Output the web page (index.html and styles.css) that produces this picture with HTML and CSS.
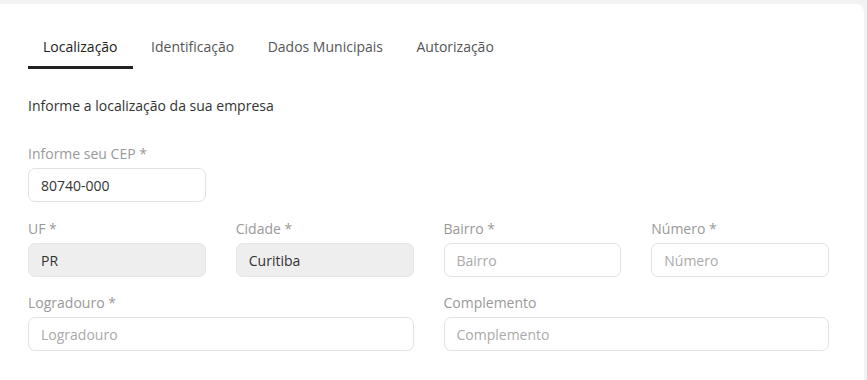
FILE: index.html
```html
<!DOCTYPE html>
<html lang="pt-BR">

<head>
    <meta charset="UTF-8">
    <meta name="viewport" content="width=device-width, initial-scale=1.0">
    <title>Cadastro - Localização</title>
    <link rel="stylesheet" href="styles.css">
</head>

<body>
    <div class="card">
        <div class="tabs">
            <div class="tab active">Localização</div>
            <div class="tab">Identificação</div>
            <div class="tab">Dados Municipais</div>
            <div class="tab">Autorização</div>
        </div>

        <p class="intro">Informe a localização da sua empresa</p>

        <form class="form">
            <div class="field first">
                <label for="cep">Informe seu CEP *</label>
                <input id="cep" type="text" value="80740-000">
            </div>

            <div class="field">
                <label for="uf">UF *</label>
                <input id="uf" type="text" value="PR" disabled>
            </div>
            <div class="field">
                <label for="cidade">Cidade *</label>
                <input id="cidade" type="text" value="Curitiba" disabled>
            </div>
            <div class="field">
                <label for="bairro">Bairro *</label>
                <input id="bairro" type="text" placeholder="Bairro">
            </div>
            <div class="field">
                <label for="numero">Número *</label>
                <input id="numero" type="text" placeholder="Número">
            </div>

            <div class="field wide">
                <label for="logradouro">Logradouro *</label>
                <input id="logradouro" type="text" placeholder="Logradouro">
            </div>
            <div class="field wide">
                <label for="complemento">Complemento</label>
                <input id="complemento" type="text" placeholder="Complemento">
            </div>
        </form>
    </div>
</body>

</html>
```

FILE: styles.css
```css
body {
    margin: 0;
    padding: 0;
    font-family: "Open Sans", sans-serif;
    font-size: 14px;
    line-height: 19px;
    background-color: #f2f2f2;
    color: #333;
}

.card {
    background-color: #ffffff;
    margin: 4px 3px 0 0;
    min-height: calc(100vh - 4px);
    box-sizing: border-box;
    padding: 33px 35px 0 28px;
    border-top-right-radius: 8px;
}

.tabs {
    display: flex;
    gap: 3.5px;
}

.tab {
    padding: 0 15px 10px;
    border-bottom: 3px solid transparent;
    color: #555;
    cursor: pointer;
}

.tab.active {
    color: #222;
    border-bottom-color: #222;
}

.intro {
    margin: 27px 0 29px;
    color: #333;
}

.form {
    display: grid;
    grid-template-columns: repeat(4, minmax(0, 1fr));
    column-gap: 30px;
    row-gap: 16px;
}

.field {
    display: flex;
    flex-direction: column;
    gap: 5px;
    min-width: 0;
}

.field.first {
    grid-column: 1 / 2;
    margin-bottom: 1px;
}

.field.first + .field {
    grid-column: 1;
}

.field.wide {
    grid-column: span 2;
}

label {
    color: #999;
}

input {
    width: 100%;
    height: 34px;
    box-sizing: border-box;
    border: 1px solid #e2e2e2;
    border-radius: 7px;
    padding: 0 12px;
    font-family: inherit;
    font-size: 14px;
    color: #333;
    background-color: #fff;
    outline: none;
}

input::placeholder {
    color: #aaa;
}

input:disabled {
    background-color: #eeeeee;
    border-color: #e6e6e6;
    color: #333;
}
```
